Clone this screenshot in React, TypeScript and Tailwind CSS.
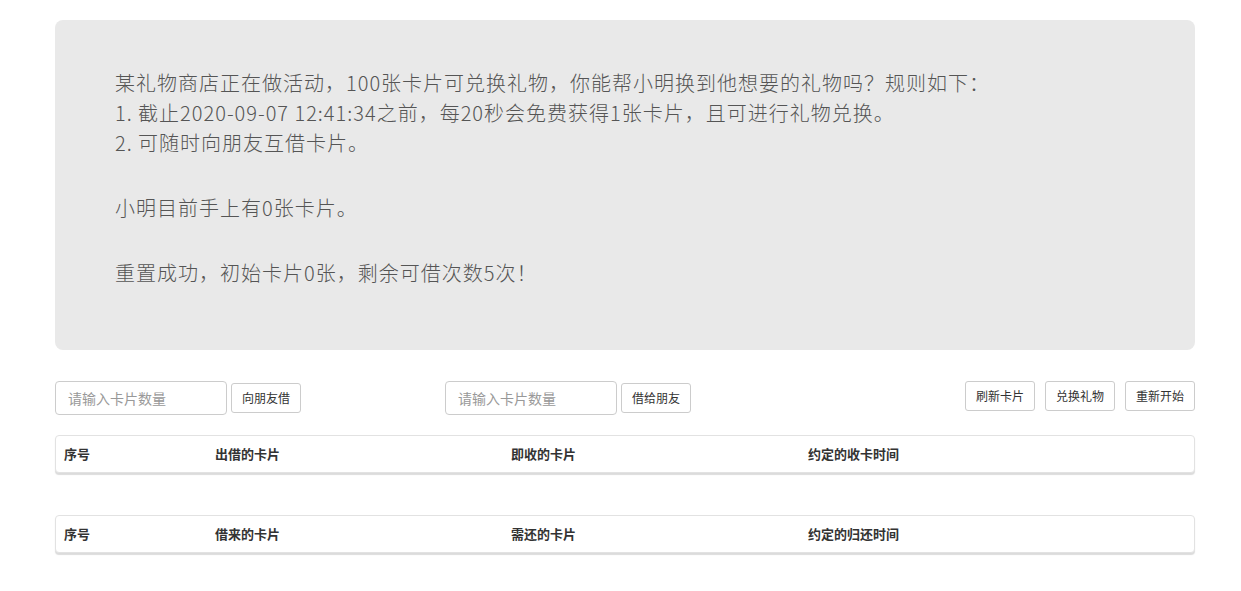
const lineFont = "font-['PingFang_SC','Noto_Sans_CJK_SC','Noto_Sans',sans-serif]";

const lendCols = ["序号", "出借的卡片", "即收的卡片", "约定的收卡时间"];
const borrowCols = ["序号", "借来的卡片", "需还的卡片", "约定的归还时间"];

function Header({ cols }: { cols: string[] }) {
    return (
        <div className="border border-[#e2e2e2] rounded-[4px] shadow-[0_2px_1px_rgba(0,0,0,0.14)] bg-white">
            <div className="flex h-[36px] items-center pl-[8px] text-[13px] font-bold text-[#333]">
                <div className="w-[151px]">{cols[0]}</div>
                <div className="w-[296px]">{cols[1]}</div>
                <div className="w-[297px]">{cols[2]}</div>
                <div className="flex-1">{cols[3]}</div>
            </div>
        </div>
    );
}

function InputGroup({ label }: { label: string }) {
    return (
        <div className="flex items-center gap-[4px]">
            <input
                placeholder="请输入卡片数量"
                className="w-[172px] h-[34px] border border-[#ccc] rounded-[4px] px-[12px] text-[14px] text-[#333] placeholder:text-[#999] outline-none"
            />
            <button className="w-[70px] h-[30px] border border-[#ccc] rounded-[3px] bg-white text-[12px] text-[#333]">
                {label}
            </button>
        </div>
    );
}

export default function App() {
    return (
        <div className={`${lineFont} bg-white w-[1241px] h-[591px] pt-[20px]`}>
            <div className="w-[1140px] ml-[55px]">
                {/* Notice panel */}
                <div className="bg-[#e9e9e9] rounded-[8px] h-[330px] pl-[60px] pt-[48px] text-[20px] leading-[30px] tracking-[1px] text-[#555] font-light">
                    <p>某礼物商店正在做活动，100张卡片可兑换礼物，你能帮小明换到他想要的礼物吗？规则如下：</p>
                    <p>1. 截止2020-09-07 12:41:34之前，每20秒会免费获得1张卡片，且可进行礼物兑换。</p>
                    <p>2. 可随时向朋友互借卡片。</p>
                    <p className="mt-[35px]">小明目前手上有0张卡片。</p>
                    <p className="mt-[35px]">重置成功，初始卡片0张，剩余可借次数5次！</p>
                </div>

                {/* Controls */}
                <div className="flex items-start mt-[31px]">
                    <InputGroup label="向朋友借" />
                    <div className="ml-[144px]">
                        <InputGroup label="借给朋友" />
                    </div>
                    <div className="ml-auto flex gap-[10px]">
                        {["刷新卡片", "兑换礼物", "重新开始"].map(b => (
                            <button key={b} className="w-[70px] h-[30px] border border-[#ccc] rounded-[3px] bg-white text-[12px] text-[#333]">
                                {b}
                            </button>
                        ))}
                    </div>
                </div>

                <div className="mt-[20px]">
                    <Header cols={lendCols} />
                </div>
                <div className="mt-[42px]">
                    <Header cols={borrowCols} />
                </div>
            </div>
        </div>
    );
}
